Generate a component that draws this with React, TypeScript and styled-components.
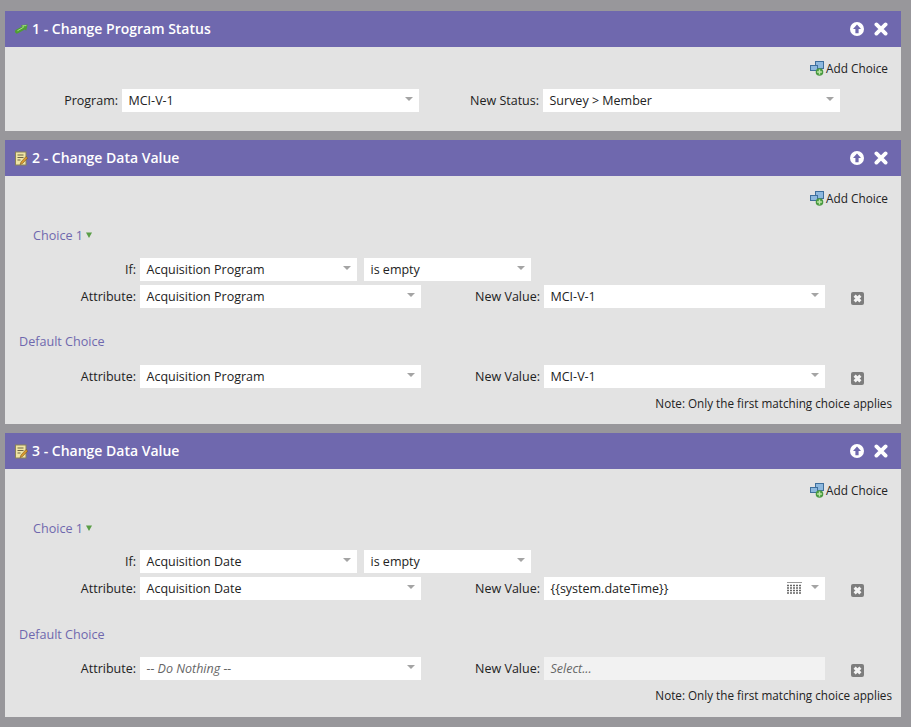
import React from "react"
import styled, { createGlobalStyle } from "styled-components"

const GlobalStyle = createGlobalStyle`
    html, body {
        margin: 0;
        padding: 0;
        background-color: #98979b;
    }
    body {
        font-family: "Open Sans", "Liberation Sans", sans-serif;
        font-size: 13px;
        color: #222;
    }
`

const Page = styled.div`
    width: 911px;
    height: 727px;
    overflow: hidden;
    padding: 11px 10px 0 5px;
    box-sizing: border-box;
    display: flex;
    flex-direction: column;
    gap: 9px;
`

const Card = styled.section`
    background-color: #e3e3e3;
`

const CardHeader = styled.header`
    height: 36px;
    background-color: #6f68ae;
    display: flex;
    align-items: center;
    padding: 0 12px 0 10px;
    color: #fff;
`

const CardTitle = styled.h2`
    flex: 1;
    margin: 0 0 0 4px;
    font-size: 14px;
    font-weight: 600;
    line-height: 36px;
`

const HeaderActions = styled.div`
    display: flex;
    align-items: center;
    gap: 10px;
    margin-right: 1px;
`

const CardBody = styled.div<{ $top: number; $bottom: number }>`
    padding: ${(p) => p.$top}px 0 ${(p) => p.$bottom}px;
`

const AddChoiceRow = styled.div`
    display: flex;
    justify-content: flex-end;
    align-items: center;
    gap: 2px;
    height: 18px;
    padding-right: 13px;
    font-size: 11.8px;
`

const ChoiceHeading = styled.div<{ $indent: number; $top: number }>`
    display: flex;
    align-items: center;
    gap: 3px;
    height: 18px;
    margin: ${(p) => p.$top}px 0 0 ${(p) => p.$indent}px;
    color: #6f68ae;
    font-size: 12.6px;
`

const Row = styled.div<{ $top: number }>`
    display: flex;
    align-items: center;
    margin-top: ${(p) => p.$top}px;
`

const FieldLabel = styled.label<{ $width: number }>`
    width: ${(p) => p.$width}px;
    margin-right: 4px;
    text-align: right;
    font-size: 12.5px;
`

const SelectBox = styled.div<{ $width: number; $disabled?: boolean; $muted?: boolean; $gap?: number }>`
    width: ${(p) => p.$width}px;
    height: 23px;
    margin-left: ${(p) => p.$gap ?? 0}px;
    box-sizing: border-box;
    padding: 0 6px 0 6.5px;
    display: flex;
    align-items: center;
    gap: 9px;
    background-color: ${(p) => (p.$disabled ? "#f2f2f2" : "#fff")};
    color: ${(p) => (p.$muted ? "#666" : "#222")};
    font-size: 12.5px;
    font-style: ${(p) => (p.$muted ? "italic" : "normal")};
`

const SelectValue = styled.span`
    flex: 1;
    white-space: nowrap;
`

const Caret = styled.span`
    width: 0;
    height: 0;
    margin-top: -4px;
    border-left: 4px solid transparent;
    border-right: 4px solid transparent;
    border-top: 4px solid #a4a4a4;
`

const RemoveButton = styled.span`
    display: flex;
    margin: 3px 0 0 26px;
`

const Note = styled.div`
    height: 18px;
    margin-top: 6px;
    padding-right: 9px;
    text-align: right;
    font-size: 11.7px;
    line-height: 18px;
`

const ArrowIcon = () => (
    <svg width="13" height="10" viewBox="0 0 13 10">
        <path d="M2 7.6 8.4 4" stroke="#4f9f33" strokeWidth="4" strokeLinecap="round" />
        <path d="M5.8 1.2 12.6.6 11.2 6.8Z" fill="#4f9f33" />
        <path d="M2.4 6.8 8.6 3.2 7.6 1.8 11.4 1.6" fill="none" stroke="#a4e084" strokeWidth="1" />
    </svg>
)

const NoteIcon = () => (
    <svg width="13" height="15" viewBox="0 0 13 15">
        <rect x="0.5" y="1" width="10.5" height="13" fill="#efe4a4" stroke="#8a8258" />
        <path d="M2.5 4h6M2.5 6.5h6M2.5 9h3" stroke="#6b6446" strokeWidth="1" />
        <path d="M5 13.5 6 11 11 5.5 12.7 7 7.5 12.6Z" fill="#d99a2e" stroke="#6e4a1c" strokeWidth="0.5" />
    </svg>
)

const UpIcon = () => (
    <svg width="14" height="14" viewBox="0 0 14 14">
        <circle cx="7" cy="7" r="7" fill="#fff" />
        <path d="M7 2.6 11 7H8.6v4.2H5.4V7H3Z" fill="#6f68ae" />
    </svg>
)

const CloseIcon = () => (
    <svg width="14" height="14" viewBox="0 0 14 14">
        <path d="M2.4 2.4 11.6 11.6M11.6 2.4 2.4 11.6" stroke="#fff" strokeWidth="3.8" strokeLinecap="round" />
    </svg>
)

const AddChoiceIcon = () => (
    <svg width="14" height="15" viewBox="0 0 14 15">
        <rect x="5.5" y="0.5" width="8" height="7" fill="#8db8de" stroke="#3f6f9c" />
        <rect x="0.5" y="4.5" width="7" height="5" fill="#8db8de" stroke="#3f6f9c" />
        <circle cx="9.5" cy="11" r="3.8" fill="#4a9a40" />
        <path d="M9.5 8.6v4.8M7.1 11h4.8" stroke="#bfe8a8" strokeWidth="1.4" />
    </svg>
)

const CollapseIcon = () => (
    <svg width="6" height="6" viewBox="0 0 6 6">
        <path d="M0 .5H6L3 6Z" fill="#5a9e46" />
    </svg>
)

const RemoveIcon = () => (
    <svg width="13" height="13" viewBox="0 0 13 13">
        <rect width="13" height="13" rx="2" fill="#7d7d7d" />
        <path d="M3.6 3.6 9.4 9.4M9.4 3.6 3.6 9.4" stroke="#f4f4f4" strokeWidth="3" />
    </svg>
)

const CalendarIcon = () => (
    <svg width="15" height="13" viewBox="0 0 15 13">
        <path d="M0 .5H15" stroke="#999" />
        <path d="M0 3.5H15M0 6H15M0 8.5H15M0 11H15" stroke="#666" strokeWidth="1.4" strokeDasharray="2 1" />
    </svg>
)

const Select = ({
    value,
    width,
    gap,
    disabled,
    muted,
    calendar,
}: {
    value: string
    width: number
    gap?: number
    disabled?: boolean
    muted?: boolean
    calendar?: boolean
}) => (
    <SelectBox $width={width} $gap={gap} $disabled={disabled} $muted={muted}>
        <SelectValue>{value}</SelectValue>
        {calendar && <CalendarIcon />}
        {!disabled && <Caret />}
    </SelectBox>
)

const AddChoice = () => (
    <AddChoiceRow>
        <AddChoiceIcon />
        Add Choice
    </AddChoiceRow>
)

const Header = ({ icon, title }: { icon: React.ReactNode; title: string }) => (
    <CardHeader>
        {icon}
        <CardTitle>{title}</CardTitle>
        <HeaderActions>
            <UpIcon />
            <CloseIcon />
        </HeaderActions>
    </CardHeader>
)

type ValueField = {
    attribute: string
    attributeMuted?: boolean
    value: string
    disabled?: boolean
    calendar?: boolean
}

const AttributeRow = ({ attribute, attributeMuted, value, disabled, calendar, top }: ValueField & { top: number }) => (
    <Row $top={top}>
        <FieldLabel $width={131}>Attribute:</FieldLabel>
        <Select value={attribute} width={281} muted={attributeMuted} />
        <FieldLabel $width={119}>New Value:</FieldLabel>
        <Select value={value} width={281} disabled={disabled} muted={disabled} calendar={calendar} />
        <RemoveButton>
            <RemoveIcon />
        </RemoveButton>
    </Row>
)

const ChangeDataCard = ({
    title,
    top,
    bottom,
    headingShift,
    ifValue,
    choice,
    fallback,
}: {
    title: string
    top: number
    bottom: number
    headingShift: number
    ifValue: string
    choice: ValueField
    fallback: ValueField
}) => (
    <Card>
        <Header icon={<NoteIcon />} title={title} />
        <CardBody $top={top} $bottom={bottom}>
            <AddChoice />
            <ChoiceHeading $indent={28} $top={19 + headingShift}>
                Choice 1 <CollapseIcon />
            </ChoiceHeading>
            <Row $top={14 - headingShift}>
                <FieldLabel $width={131}>If:</FieldLabel>
                <Select value={ifValue} width={217} />
                <Select value="is empty" width={167} gap={7} />
            </Row>
            <AttributeRow {...choice} top={4} />
            <ChoiceHeading $indent={14} $top={24 + headingShift}>
                Default Choice
            </ChoiceHeading>
            <AttributeRow {...fallback} top={15 - headingShift} />
            <Note>Note: Only the first matching choice applies</Note>
        </CardBody>
    </Card>
)

export default function App() {
    return (
        <Page>
            <GlobalStyle />
            <Card>
                <Header icon={<ArrowIcon />} title="1 - Change Program Status" />
                <CardBody $top={12} $bottom={19}>
                    <AddChoice />
                    <Row $top={12}>
                        <FieldLabel $width={113}>Program:</FieldLabel>
                        <Select value="MCI-V-1" width={297} />
                        <FieldLabel $width={120}>New Status:</FieldLabel>
                        <Select value="Survey > Member" width={297} />
                    </Row>
                </CardBody>
            </Card>
            <ChangeDataCard
                title="2 - Change Data Value"
                top={13}
                bottom={12}
                headingShift={0}
                ifValue="Acquisition Program"
                choice={{ attribute: "Acquisition Program", value: "MCI-V-1" }}
                fallback={{ attribute: "Acquisition Program", value: "MCI-V-1" }}
            />
            <ChangeDataCard
                title="3 - Change Data Value"
                top={12}
                bottom={13}
                headingShift={1}
                ifValue="Acquisition Date"
                choice={{ attribute: "Acquisition Date", value: "{{system.dateTime}}", calendar: true }}
                fallback={{ attribute: "-- Do Nothing --", attributeMuted: true, value: "Select...", disabled: true }}
            />
        </Page>
    )
}
